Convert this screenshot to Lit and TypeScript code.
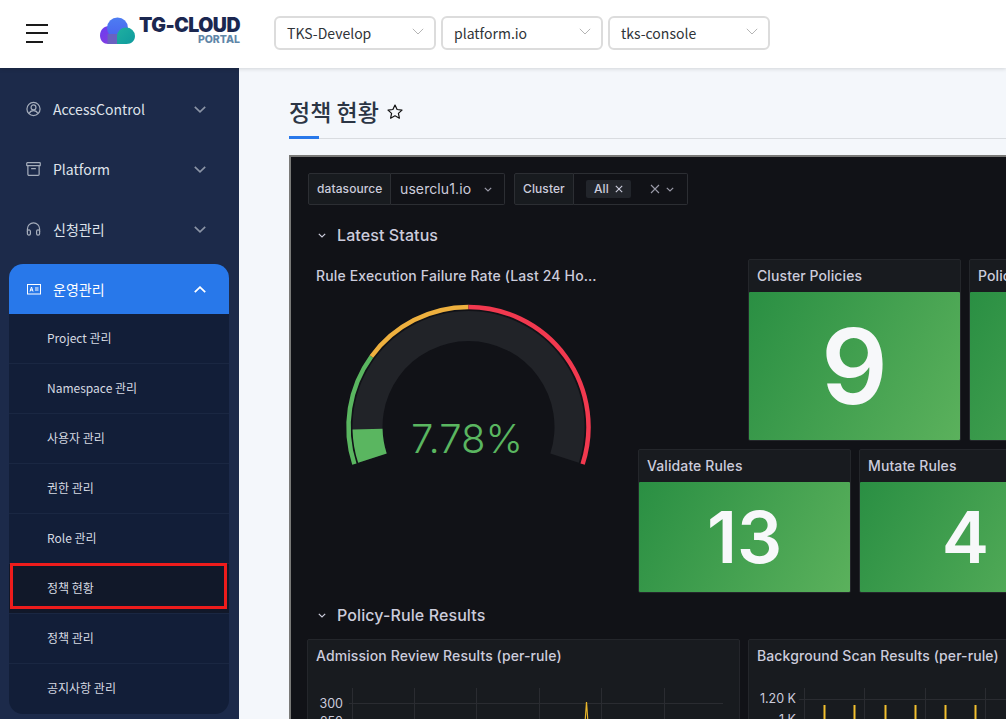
import { LitElement, html, css, svg } from "lit";
import { customElement } from "lit/decorators.js";

const chevronDown = html`<svg class="chev" width="12" height="7" viewBox="0 0 12 7" fill="none" stroke="currentColor" stroke-width="1.6"><path d="M.8.8 6 5.8 11.2.8"/></svg>`;
const chevronUp = html`<svg class="chev" width="12" height="7" viewBox="0 0 12 7" fill="none" stroke="currentColor" stroke-width="1.8"><path d="M.8 6.2 6 1.2l5.2 5"/></svg>`;
const miniChev = html`<svg class="mini" width="8" height="5" viewBox="0 0 8 5" fill="none" stroke="currentColor" stroke-width="1.2"><path d="M.8.8 4 4 7.2.8"/></svg>`;

const icons: Record<string, unknown> = {
  user: html`<svg width="16" height="16" viewBox="0 0 16 16" fill="none" stroke="currentColor" stroke-width="1.3"><circle cx="8" cy="8" r="7"/><circle cx="8" cy="6.3" r="2.6"/><path d="M3.4 13c.7-2.2 2.5-3.2 4.6-3.2s3.900 1 4.600 3.200"/></svg>`,
  box: html`<svg width="16" height="16" viewBox="0 0 16 16" fill="none" stroke="currentColor" stroke-width="1.3"><rect x=".8" y="1.300" width="14.400" height="3.200" rx=".6"/><path d="M2 4.500v9a1.200 1.200 0 0 0 1.200 1.200h9.600A1.200 1.200 0 0 0 14 13.500v-9M5.500 7.500h5"/></svg>`,
  head: html`<svg width="16" height="16" viewBox="0 0 16 16" fill="none" stroke="currentColor" stroke-width="1.3"><path d="M1.500 11V8a6.500 6.500 0 0 1 13 0v3"/><rect x="1.500" y="9" width="3.200" height="5.500" rx="1.500"/><rect x="11.300" y="9" width="3.200" height="5.500" rx="1.500"/></svg>`,
  card: html`<svg width="14" height="12" viewBox="0 0 14 12" fill="none" stroke="currentColor" stroke-width="1"><rect x=".5" y="1.500" width="13" height="9.500"/><path d="M3 8.500 4.500 4 6 8.500M3.500 7h2M8 5h3.500M8 7h3.500"/></svg>`,
};

const sub = ["Project 관리", "Namespace 관리", "사용자 관리", "권한 관리", "Role 관리", "정책 현황", "정책 관리", "공지사항 관리"];

function arc(r: number, from: number, to: number, R = 0) {
  const p = (f: number, rad: number) => {
    const a = ((198 - f * 216) * Math.PI) / 180;
    return `${(161.5 + rad * Math.cos(a)).toFixed(2)} ${(135 - rad * Math.sin(a)).toFixed(2)}`;
  };
  const large = (to - from) * 216 > 180 ? 1 : 0;
  if (!R) return `M${p(from, r)}A${r} ${r} 0 ${large} 1 ${p(to, r)}`;
  return `M${p(from, R)}A${R} ${R} 0 ${large} 1 ${p(to, R)}L${p(to, r)}A${r} ${r} 0 ${large} 0 ${p(from, r)}Z`;
}

@customElement("app-root")
export class AppRoot extends LitElement {
  static styles = css`
    :host { display: block; width: 100%; height: 100vh; overflow: hidden; font-family: "Noto Sans CJK KR", "Noto Sans", sans-serif; background: #f4f7fb; }
    .top { height: 68px; background: #fff; display: flex; align-items: center; box-shadow: 0 1px 4px rgba(0,0,0,.14); position: relative; z-index: 2; }
    .burger { width: 22px; margin: -2px 0 0 26px; display: flex; flex-direction: column; gap: 6.500px; }
    .burger i { display: block; height: 2px; background: #1a1a1a; }
    .burger i:last-child { width: 17px; }
    .logo { display: flex; margin: -6px 0 0 52px; width: 174px; align-items: center; gap: 2px; }
    .lt { display: flex; flex-direction: column; align-items: flex-end; line-height: 1; width: 102px; flex: none; }
    .lt b { font: 900 19.500px/18px Inter, sans-serif; color: #1b2750; letter-spacing: -.5px; white-space: nowrap; }
    .lt span { font: 800 10.500px/12px Inter, sans-serif; color: #5f86a8; }
    .sel { box-sizing: border-box; width: 162px; height: 34px; margin-top: -2px; border: 2px solid #dcdcdc; border-radius: 6px; margin-right: 5px; padding: 0 10px 0 11px; display: flex; align-items: center; justify-content: space-between; font-size: 14px; color: #2f3438; }
    .sel svg { color: #b5b5b5; margin-top: -3px; }
    .body { display: flex; height: calc(100vh - 68px); }
    .side { width: 239px; flex: none; background: #1c2a4a; padding: 16px 10px 0 9px; box-sizing: border-box; }
    .item { height: 50px; margin-bottom: 10px; display: flex; align-items: center; padding: 0 23px 0 17px; color: #dfe3ea; font-size: 14px; gap: 12px; }
    .item .ic { color: #a5adbb; display: flex; width: 15px; justify-content: center; }
    .item .lab { flex: 1; }
    .item .chev { color: #8b94a6; }
    .group { background: #121e38; border-radius: 14px; overflow: hidden; }
    .group .item { background: #2878ea; margin: 0; color: #fff; }
    .group .item .ic, .group .item .chev { color: #fff; }
    .si { box-sizing: border-box; height: 50px; display: flex; align-items: center; padding: 0 0 2px 38px; font-size: 12px; color: #d6dae2; border-bottom: 1px solid #1a2742; position: relative; }
    .si:last-child { border-bottom-color: transparent; }
    .si.on { background: #111829; }
    .mark { position: absolute; left: 1px; top: -1px; width: 217px; height: 46px; box-sizing: border-box; border: 3px solid #ee1c1c; }
    .main { flex: 1; min-width: 0; padding: 26px 0 0 50px; overflow: hidden; }
    .title { display: flex; align-items: center; gap: 8px; height: 41px; font-size: 23px; font-weight: 500; color: #2b3544; margin-bottom: 3px; line-height: 1; padding-bottom: 6px; box-sizing: border-box; }
    .rule { height: 1px; background: #d9dce0; position: relative; margin-bottom: 16px; }
    .rule::before { content: ""; position: absolute; left: 0; bottom: 0; width: 30px; height: 3px; background: #2878ea; }
    .dash { width: 1000px; height: 700px; background: #111217; border: 2px solid #7a7a78; border-width: 2px 0 0 2px; padding: 16px 0 0 17px; box-sizing: border-box; font-family: Inter, sans-serif; color: #ccccdc; }
    .vars { display: flex; height: 32px; margin-bottom: 15px; }
    .vl, .vs { box-sizing: border-box; height: 32px; border: 1px solid #2c2e33; display: flex; align-items: center; padding-bottom: 2px; }
    .vl { background: #181b1f; border-radius: 2px 0 0 2px; font-size: 12px; font-weight: 500; padding-left: 8px; letter-spacing: .1px; }
    .vs { border-left: 0; border-radius: 0 2px 2px 0; font-size: 14px; padding-left: 9px; position: relative; color: #ccccdc; letter-spacing: .1px; }
    .vs .mini { color: #9a9aa8; margin-top: 2px; }
    .chip { box-sizing: content-box; background: #22252b; border-radius: 2px; height: 18px; display: flex; align-items: center; font-size: 12px; font-weight: 500; padding: 0 6px 0 8px; gap: 6px; margin: 1px 0 0 3px; width: 31px; line-height: 16px; }
    .row { display: flex; align-items: center; gap: 9px; height: 30px; padding-left: 10px; font-size: 16px; font-weight: 500; letter-spacing: .1px; }
    .row svg { color: #ccccdc; margin-right: 2px; }
    .grid { display: flex; margin-top: 9px; margin-left: -1px; height: 334px; }
    .gauge { width: 331px; flex: none; }
    .gt { font-size: 14px; font-weight: 500; letter-spacing: .15px; width: 282px; margin-left: 9px; height: 33px; line-height: 34px; white-space: nowrap; overflow: hidden; text-overflow: ellipsis; }
    .gauge svg { display: block; }
    .stats { display: flex; flex-direction: column; gap: 8px; }
    .sr { display: flex; gap: 8px; }
    .sr.a { margin-left: 110px; }
    .stat { box-sizing: border-box; width: 213px; background: #181b1f; border: 1px solid #24262b; border-radius: 2px; display: flex; flex-direction: column; flex: none; }
    .stat.a { height: 182px; }
    .stat.b { height: 144px; }
    .st { height: 32px; flex: none; padding-left: 8px; font-size: 14px; font-weight: 500; letter-spacing: .1px; line-height: 32px; }
    .sb { flex: 1; background: linear-gradient(120deg, #2a8f43, #5bb15c); color: #f7f8fa; font-weight: 600; display: flex; align-items: center; justify-content: center; border-radius: 1px; }
    .a .sb { font-size: 104px; }
    .b .sb { font-size: 71px; }
    .row2 { margin-top: 7px; }
    .charts { display: flex; gap: 8px; margin-top: 9px; margin-left: -1px; }
    .chart { box-sizing: border-box; width: 433px; height: 200px; background: #181b1f; border: 1px solid #24262b; border-radius: 2px; flex: none; }
    .chart .st { height: 33px; line-height: 32px; }
    .chart svg { display: block; }
    .chart text { font: 400 12.500px Inter, sans-serif; fill: #ccccdc; }
  `;

  render() {
    return html`
      <div class="top">
        <div class="burger"><i></i><i></i><i></i></div>
        <div class="logo">
          <svg width="36" height="28" viewBox="0 0 36 28">
            <defs>
              <linearGradient id="lb" x1="0" y1="0" x2="0" y2="1"><stop offset="0" stop-color="#4d7df2"/><stop offset="1" stop-color="#4a63ee"/></linearGradient>
              <linearGradient id="lp" x1="0" y1="0" x2="1" y2="1"><stop offset="0" stop-color="#6a3cf0"/><stop offset="1" stop-color="#8b3ddc"/></linearGradient>
              <linearGradient id="lt" x1="0" y1="0" x2="1" y2="1"><stop offset="0" stop-color="#1fb0a0"/><stop offset="1" stop-color="#0f9a9e"/></linearGradient>
            </defs>
            <path d="M0 18.500C0 13 4 9 9 9s9 4 9 9v9H8.500C3.500 27 0 23.500 0 18.500Z" fill="url(#lp)"/>
            <circle cx="17.500" cy="11" r="10.500" fill="url(#lb)"/>
            <path d="M7.500 17h11v10h-11z" fill="#6a62c0"/>
            <path d="M17 19a9 8.500 0 0 1 18 0c0 4.500-3.500 8-8.500 8H17Z" fill="url(#lt)"/>
          </svg>
          <div class="lt"><b>TG-CLOUD</b><span>PORTAL</span></div>
        </div>
        <div class="sel">TKS-Develop ${this.selChev()}</div>
        <div class="sel">platform.io ${this.selChev()}</div>
        <div class="sel">tks-console ${this.selChev()}</div>
      </div>
      <div class="body">
        <aside class="side">
          ${this.nav("user", "AccessControl")}
          ${this.nav("box", "Platform")}
          ${this.nav("head", "신청관리")}
          <div class="group">
            <div class="item"><span class="ic">${icons.card}</span><span class="lab">운영관리</span>${chevronUp}</div>
            ${sub.map((s) => html`<div class="si ${s === "정책 현황" ? "on" : ""}">${s}${s === "정책 현황" ? html`<div class="mark"></div>` : ""}</div>`)}
          </div>
        </aside>
        <main class="main">
          <div class="title">정책 현황
            <svg width="16" height="15" viewBox="0 0 16 15" fill="none" stroke="#111" stroke-width="1.200" stroke-linejoin="round"><path d="M8 1l2.100 4.500 4.900.6-3.600 3.300 1 4.800L8 11.800l-4.400 2.400 1-4.800L1 6.100l4.900-.6z"/></svg>
          </div>
          <div class="rule"></div>
          <div class="dash">
            <div class="vars">
              <div class="vl" style="width:83px">datasource</div>
              <div class="vs" style="width:114px;gap:13px">userclu1.io ${miniChev}</div>
              <div style="width:9px"></div>
              <div class="vl" style="width:60px">Cluster</div>
              <div class="vs" style="width:114px">
                <span class="chip">All <svg width="8" height="8" viewBox="0 0 8 8" stroke="#ccccdc" stroke-width="1.100"><path d="M.8.8l6.400 6.400M7.200.8.800 7.200"/></svg></span>
                <svg style="margin:2px 0 0 19px" width="10" height="10" viewBox="0 0 10 10" stroke="#9a9aa8" stroke-width="1.100"><path d="M1 1l8 8M9 1 1 9"/></svg>
                <span style="margin-left:6px;display:flex">${miniChev}</span>
              </div>
            </div>
            <div class="row">${miniChev}<span>Latest Status</span></div>
            <div class="grid">
              <div class="gauge">
                <div class="gt">Rule Execution Failure Rate (Last 24 Hours)</div>
                ${this.gauge()}
              </div>
              <div class="stats">
                <div class="sr a">
                  ${this.stat("a", "Cluster Policies", "9")}
                  ${this.stat("a", "Policies", "")}
                </div>
                <div class="sr">
                  ${this.stat("b", "Validate Rules", "13")}
                  ${this.stat("b", "Mutate Rules", "4")}
                </div>
              </div>
            </div>
            <div class="row row2">${miniChev}<span>Policy-Rule Results</span></div>
            <div class="charts">
              <div class="chart">
                <div class="st">Admission Review Results (per-rule)</div>
                ${this.chartA()}
              </div>
              <div class="chart">
                <div class="st">Background Scan Results (per-rule)</div>
                ${this.chartB()}
              </div>
            </div>
          </div>
        </main>
      </div>
    `;
  }

  selChev() {
    return html`<svg width="12" height="7" viewBox="0 0 12 7" fill="none" stroke="currentColor" stroke-width="1"><path d="M.8.8 6 6 11.200.8"/></svg>`;
  }

  nav(i: string, label: string) {
    return html`<div class="item"><span class="ic">${icons[i]}</span><span class="lab">${label}</span>${chevronDown}</div>`;
  }

  stat(k: string, t: string, v: string) {
    return html`<div class="stat ${k}"><div class="st">${t}</div><div class="sb">${v}</div></div>`;
  }

  gauge() {
    return html`<svg width="323" height="200" viewBox="0 0 323 200" fill="none">
      ${svg`
        <path d=${arc(86, 0, 1, 116)} fill="#212328"/>
        <path d=${arc(86, 0, 0.0778, 116)} fill="#5ab660"/>
        <path d=${arc(120, 0, 0.25)} stroke="#5ab660" stroke-width="4.500"/>
        <path d=${arc(120, 0.25, 0.5)} stroke="#eeb03e" stroke-width="4.500"/>
        <path d=${arc(120, 0.5, 1)} stroke="#f2394f" stroke-width="4.500"/>
        <text x="160" y="160.500" text-anchor="middle" font-family="Inter, sans-serif" font-size="40" font-weight="300" fill="#5ab660">7.78%</text>
      `}
    </svg>`;
  }

  chartA() {
    const xs = [44, 106, 168, 231, 293, 356];
    return html`<svg width="431" height="60" viewBox="0 0 431 60" fill="none">
      ${svg`
        ${xs.map((x) => svg`<path d="M${x + 0.5} 15V60" stroke="#2a2c31"/>`)}
        <path d="M41 30.500H415" stroke="#2a2c31"/>
        <path d="M277 50 278.500 29 280 50" stroke="#e8b52a" stroke-width="1.200"/>
        <text x="35" y="35" text-anchor="end">300</text>
        <text x="35" y="53" text-anchor="end">250</text>
      `}
    </svg>`;
  }

  chartB() {
    const xs = [55, 115, 176, 236, 296];
    const bars = [75, 105, 136, 166, 196, 226];
    return html`<svg width="431" height="60" viewBox="0 0 431 60" fill="none">
      ${svg`
        ${xs.map((x) => svg`<path d="M${x + 0.5} 15V60" stroke="#2a2c31"/>`)}
        <path d="M50 26.500H431" stroke="#2a2c31"/>
        ${bars.map((x) => svg`<path d="M${x + 0.5} 32V60" stroke="#f2c02e" stroke-width="2"/>`)}
        <text x="47" y="30" text-anchor="end">1.20 K</text>
        <text x="47" y="51" text-anchor="end">1 K</text>
      `}
    </svg>`;
  }
}
